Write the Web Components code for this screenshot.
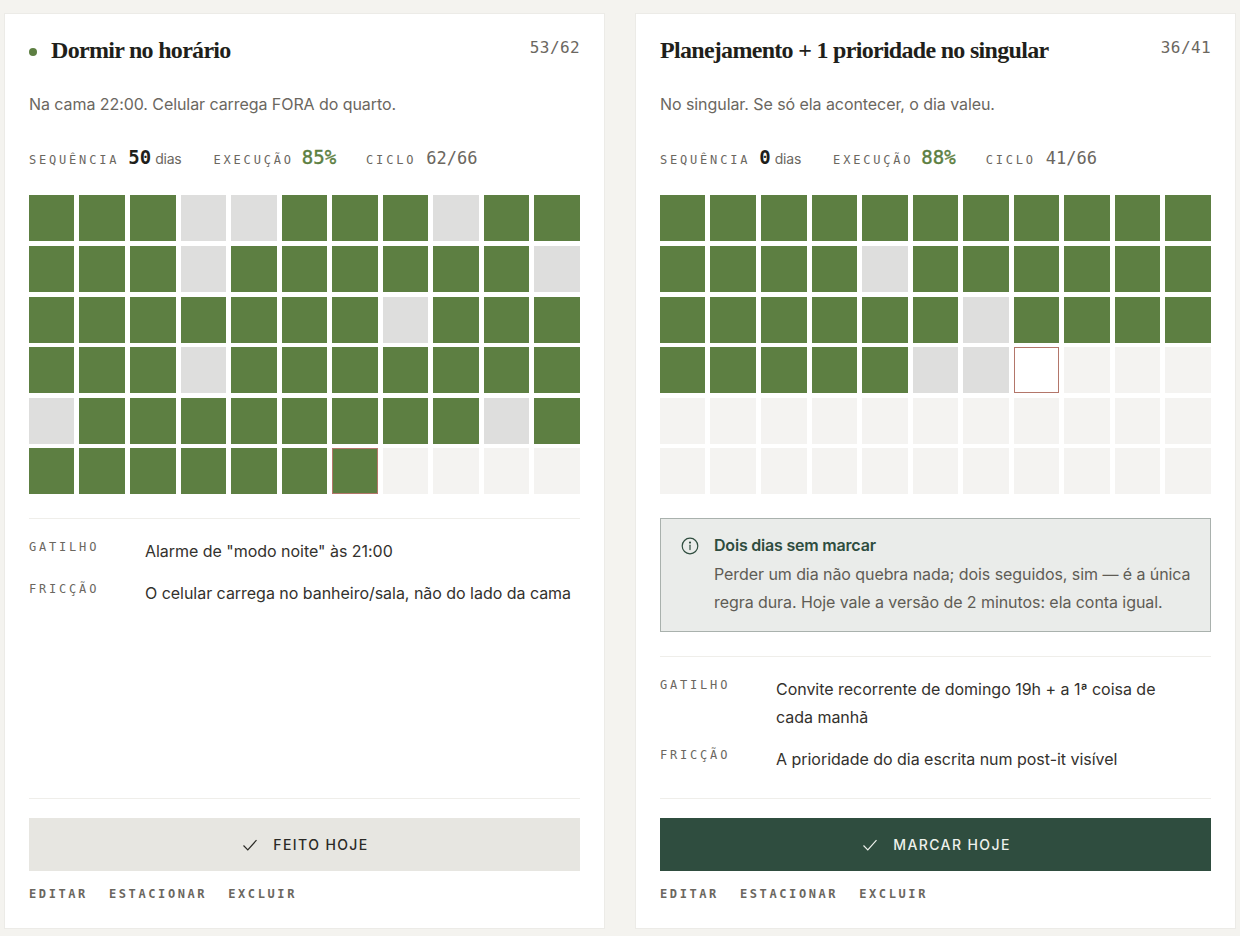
<!DOCTYPE html>
<html lang="pt-BR">
<head>
<meta charset="utf-8">
<title>Hábitos</title>
<style>
    html, body { margin: 0; height: 100%; background: #f4f3ef; }
    body { font-family: "Inter", "Liberation Sans", sans-serif; overflow: hidden; }
    main { display: grid; grid-template-columns: 601px 601px; column-gap: 30px; padding: 13px 4px 8px; height: 936px; box-sizing: border-box; }
</style>
</head>
<body>
<main>
    <habit-card name="Dormir no horário" dot count="53/62" why="Na cama 22:00. Celular carrega FORA do quarto."
        streak="50" rate="85%" cycle="62/66"
        days="GGGXXGGGXGG GGGXGGGGGGX GGGGGGGXGGG GGGXGGGGGGG XGGGGGGGGXG GGGGGGTEEEE"
        action="FEITO HOJE" done>
        <field-row label="GATILHO">Alarme de "modo noite" às 21:00</field-row>
        <field-row label="FRICÇÃO">O celular carrega no banheiro/sala, não do lado da cama</field-row>
    </habit-card>
    <habit-card name="Planejamento + 1 prioridade no singular" count="36/41" why="No singular. Se só ela acontecer, o dia valeu."
        streak="0" rate="88%" cycle="41/66"
        days="GGGGGGGGGGG GGGGXGGGGGG GGGGGGXGGGG GGGGGXXWEEE EEEEEEEEEEE EEEEEEEEEEE"
        action="MARCAR HOJE">
        <notice-box slot="notice" heading="Dois dias sem marcar">Perder um dia não quebra nada; dois seguidos, sim — é a única regra dura. Hoje vale a versão de 2 minutos: ela conta igual.</notice-box>
        <field-row label="GATILHO">Convite recorrente de domingo 19h + a 1ª coisa de<br>cada manhã</field-row>
        <field-row label="FRICÇÃO">A prioridade do dia escrita num post-it visível</field-row>
    </habit-card>
</main>

<script>
const MONO = '"DejaVu Sans Mono", "Liberation Mono", monospace';

class DayGrid extends HTMLElement {
    constructor() {
        super();
        this.shadow = this.attachShadow({ mode: 'open' });
    }

    connectedCallback() {
        const cells = this.getAttribute('days').replace(/\s/g, '').split('');
        this.shadow.innerHTML = `
        <style>
            :host { display: grid; grid-template-columns: repeat(11, 1fr); gap: 4.6px 5px; }
            i { display: block; height: 46px; box-sizing: border-box; }
            .G { background: #5d7f42; }
            .X { background: #dededd; }
            .E { background: #f4f3f1; }
            .T { background: #5d7f42; box-shadow: inset 0 0 0 1px #b3766a; }
            .W { background: #fff; box-shadow: inset 0 0 0 1px #b3766a; }
        </style>
        ${cells.map(c => `<i class="${c}"></i>`).join('')}
        `;
    }
}

class StatRow extends HTMLElement {
    constructor() {
        super();
        this.shadow = this.attachShadow({ mode: 'open' });
    }

    connectedCallback() {
        this.shadow.innerHTML = `
        <style>
            :host { display: flex; align-items: baseline; color: #6b675f; height: 24px; font-family: ${MONO}; }
            .lab { font-size: 12px; letter-spacing: 2.8px; margin-right: 9px; }
            .lab.exec { margin-right: 8px; }
            .lab.cycle { margin-right: 10px; }
            .val { font-size: 17px; margin-right: 4px; }
            .streak { font-size: 19px; color: #1f1f1b; font-weight: 700; }
            .rate { font-size: 19px; color: #5d7f42; -webkit-text-stroke: 0.4px #5d7f42; margin-right: 30px; }
            .unit { font-family: "Inter", sans-serif; font-size: 14px; margin-right: 32px; letter-spacing: -0.2px; }
        </style>
        <span class="lab">SEQUÊNCIA</span><span class="val streak">${this.getAttribute('streak')}</span><span class="unit">dias</span>
        <span class="lab exec">EXECUÇÃO</span><span class="val rate">${this.getAttribute('rate')}</span>
        <span class="lab cycle">CICLO</span><span class="val">${this.getAttribute('cycle')}</span>
        `;
    }
}

class FieldRow extends HTMLElement {
    constructor() {
        super();
        this.shadow = this.attachShadow({ mode: 'open' });
    }

    connectedCallback() {
        this.shadow.innerHTML = `
        <style>
            :host { display: grid; grid-template-columns: 116px 1fr; color: #33312d; font-size: 16px; line-height: 28px; letter-spacing: -0.03px; }
            .lab { font-family: ${MONO}; font-size: 12px; letter-spacing: 2.8px; line-height: 20px; color: #6b675f; }
        </style>
        <span class="lab">${this.getAttribute('label')}</span>
        <span><slot></slot></span>
        `;
    }
}

class NoticeBox extends HTMLElement {
    constructor() {
        super();
        this.shadow = this.attachShadow({ mode: 'open' });
    }

    connectedCallback() {
        this.shadow.innerHTML = `
        <style>
            :host { display: grid; grid-template-columns: 18px 1fr; column-gap: 15px; box-sizing: border-box; height: 114px; padding: 15px 18px 0 20px; background: #eaecea; border: 1px solid #a9b1ad; }
            svg { width: 18px; height: 18px; margin-top: 3px; }
            h4 { margin: 0 0 4px; font-size: 16px; line-height: 22px; font-weight: 600; letter-spacing: -0.2px; color: #2f4d3f; }
            p { margin: 0; font-size: 16px; line-height: 28px; letter-spacing: -0.07px; color: #5f5c55; }
        </style>
        <svg viewBox="0 0 18 18" fill="none" stroke="#2f4d3f" stroke-width="1.2" stroke-linecap="round">
            <circle cx="9" cy="9" r="7.8"/>
            <path d="M9 8.2v4.4"/>
            <circle cx="9" cy="5.6" r=".5" fill="#2f4d3f"/>
        </svg>
        <div>
            <h4>${this.getAttribute('heading')}</h4>
            <p><slot></slot></p>
        </div>
        `;
    }
}

class ActionButton extends HTMLElement {
    constructor() {
        super();
        this.shadow = this.attachShadow({ mode: 'open' });
    }

    connectedCallback() {
        this.shadow.innerHTML = `
        <style>
            :host { display: flex; align-items: center; justify-content: center; column-gap: 15px; height: 53px; padding-left: 2px; font-size: 14px; font-weight: 500; letter-spacing: 1.4px; background: #2f4d3f; color: #eef1ec; }
            :host([done]) { background: #e7e6e1; color: #2b2a26; }
            svg { width: 16px; height: 16px; }
        </style>
        <svg viewBox="0 0 16 16" fill="none" stroke="currentColor" stroke-width="1.2"><path d="M1.5 8.5 L5.8 12.8 L14.5 3.2"/></svg>
        <span><slot></slot></span>
        `;
    }
}

class HabitCard extends HTMLElement {
    constructor() {
        super();
        this.shadow = this.attachShadow({ mode: 'open' });
    }

    connectedCallback() {
        const done = this.hasAttribute('done');
        this.shadow.innerHTML = `
        <style>
            :host { display: flex; flex-direction: column; box-sizing: border-box; height: 916px; padding: 24px 24px 0; background: #fff; border: 1px solid #ecebe7; }
            header { display: flex; justify-content: space-between; height: 28px; }
            .title { display: flex; align-items: center; column-gap: 14px; height: 24px; }
            h3 { margin: 0; font-family: "Liberation Serif", serif; font-size: 24px; line-height: 28px; font-weight: 700; letter-spacing: -0.7px; color: #1f1f1b; }
            .dot { width: 8px; height: 8px; margin-top: 3px; border-radius: 50%; background: #5d7f42; }
            .count { font-family: ${MONO}; font-size: 16px; line-height: 20px; color: #6b675f; letter-spacing: 0.4px; }
            .why { margin: 26px 0 30px; font-size: 16px; line-height: 24px; letter-spacing: -0.07px; color: #6b675f; }
            habit-grid { margin: 25.4px 0 0 -0.1px; }
            ::slotted(notice-box) { margin-top: 24px; }
            .fields { margin-top: 24px; padding-top: 18px; border-top: 1px solid #efeeea; display: flex; flex-direction: column; row-gap: 14px; }
            .bottom { margin-top: auto; border-top: 1px solid #efeeea; padding-top: 19px; }
            nav { display: flex; column-gap: 21px; height: 57px; padding-top: 15px; box-sizing: border-box; font-family: ${MONO}; font-size: 12px; font-weight: 700; line-height: 16px; letter-spacing: 2.6px; color: #6b675f; }
        </style>
        <header>
            <div class="title">${this.hasAttribute('dot') ? '<span class="dot"></span>' : ''}<h3>${this.getAttribute('name')}</h3></div>
            <span class="count">${this.getAttribute('count')}</span>
        </header>
        <p class="why">${this.getAttribute('why')}</p>
        <stat-row streak="${this.getAttribute('streak')}" rate="${this.getAttribute('rate')}" cycle="${this.getAttribute('cycle')}"></stat-row>
        <habit-grid days="${this.getAttribute('days')}"></habit-grid>
        <slot name="notice"></slot>
        <div class="fields"><slot></slot></div>
        <div class="bottom">
            <action-button ${done ? 'done' : ''}>${this.getAttribute('action')}</action-button>
            <nav><span>EDITAR</span><span>ESTACIONAR</span><span>EXCLUIR</span></nav>
        </div>
        `;
    }
}

customElements.define('habit-grid', DayGrid);
customElements.define('stat-row', StatRow);
customElements.define('field-row', FieldRow);
customElements.define('notice-box', NoticeBox);
customElements.define('action-button', ActionButton);
customElements.define('habit-card', HabitCard);
</script>
</body>
</html>
